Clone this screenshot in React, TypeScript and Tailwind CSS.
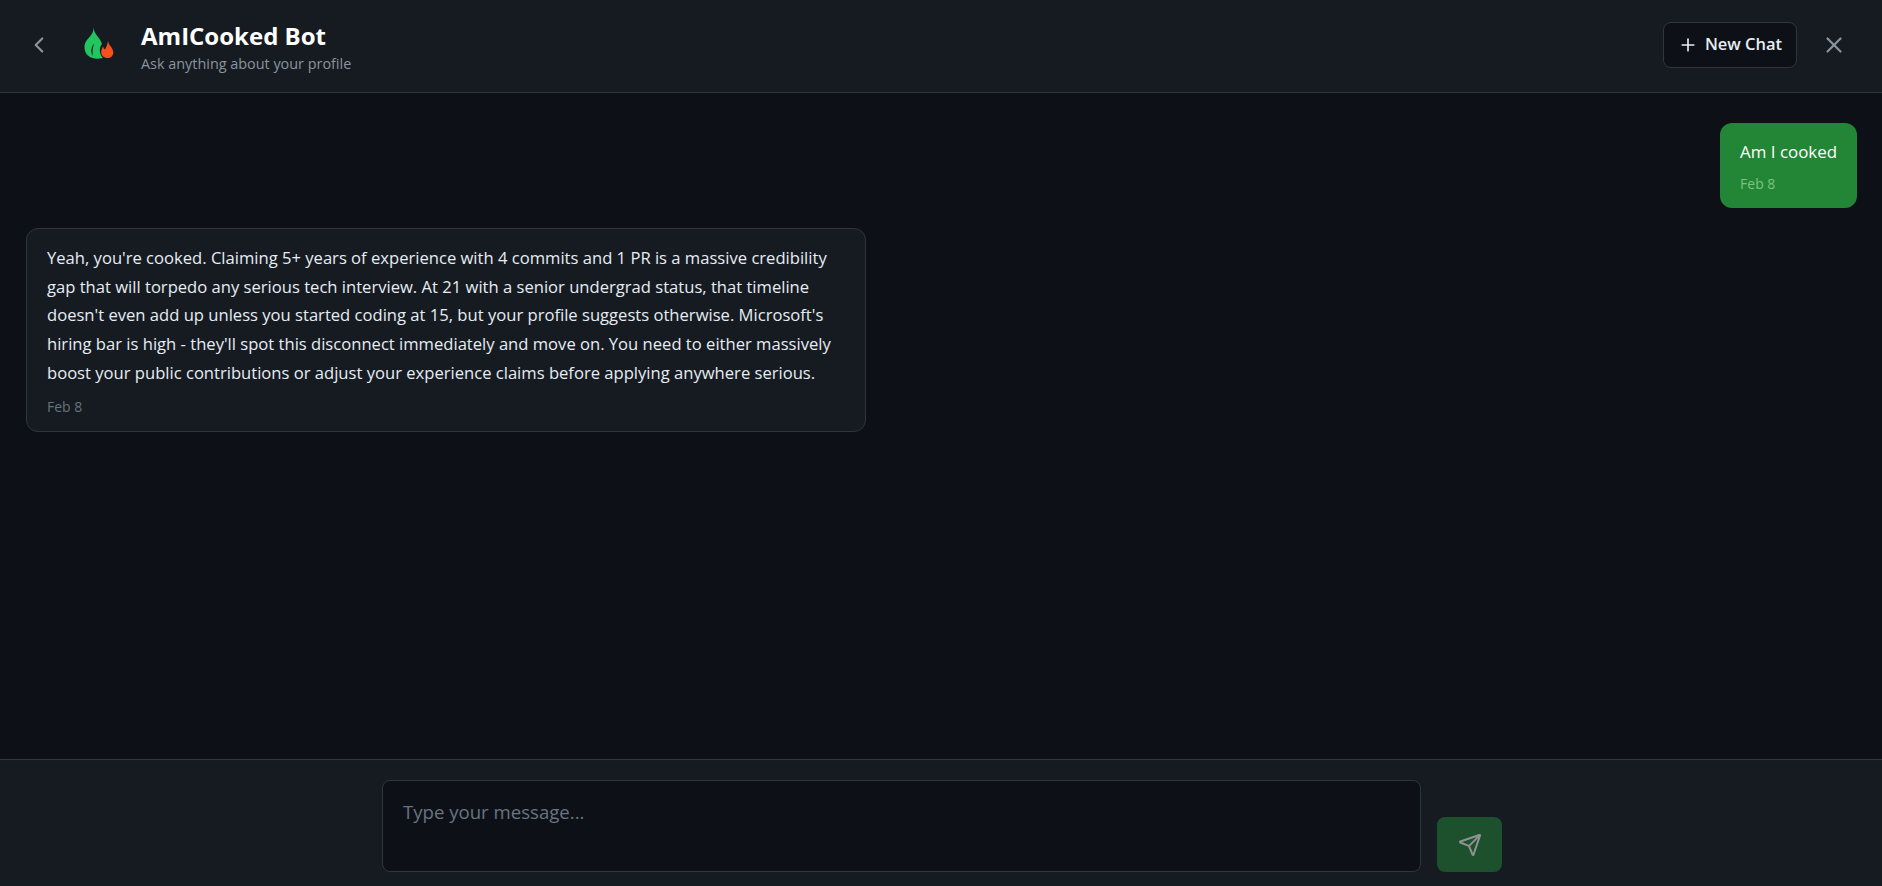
import React from 'react';
import { ChevronLeft, Plus, X, Send } from 'lucide-react';

const FlameLogo = () => (
  <svg width="30" height="32" viewBox="0 0 30 32" className="shrink-0">
    <path
      d="M9.500 .5C10 4.500 11.500 7 14 10C16 12.500 17.500 15 18 17C16 19 15.500 22 16 25C16.500 27.500 17.500 29.500 19 31C15 32 11 32 8 30.800C3.500 29.500 .5 25.500 .5 20C.5 15 3.500 12.500 6 9.500C8 7 9.800 4 9.500 .5Z"
      fill="#22c55e"
    />
    <path d="M10 16.500C7.500 19.500 6.300 24.500 8.700 29C8.300 24.500 8.800 20.500 10 16.500Z" fill="#161b22" />
    <path
      d="M24 13.700C24.500 17 26 18.500 27.500 20.500C28.800 22.500 29.500 24.500 29.300 26C29 29 26.500 31 23.500 31C20 31 17.200 28.500 17.200 25.500C17.200 23 18 21 19.200 19.500C19.500 21 20 22 21 22.500C22.500 20 23.500 17 24 13.700Z"
      fill="#f4511e"
      stroke="#161b22"
      strokeWidth="0.8"
      paintOrder="stroke"
    />
  </svg>
);

export default function App() {
  return (
    <div className="flex flex-col h-screen bg-[#0d1117] font-['Open_Sans','Liberation_Sans',sans-serif] overflow-hidden">
      <header className="flex items-center justify-between h-[93px] shrink-0 bg-[#161b22] border-b border-[#30363d] pl-[26px] pr-[30px] pb-[3px]">
        <div className="flex items-center">
          <button className="w-[26px] flex justify-center text-[#8b949e]">
            <ChevronLeft size={26} />
          </button>
          <div className="ml-[32px] mb-[3px]">
            <FlameLogo />
          </div>
          <div className="ml-[27px] mt-[4px]">
            <h1 className="text-[24px] leading-[30px] font-bold text-white">AmICooked Bot</h1>
            <p className="mt-[4px] text-[14.400px] leading-[18px] text-[#8b949e]">Ask anything about your profile</p>
          </div>
        </div>
        <div className="flex items-center gap-[19px]">
          <button className="flex items-center justify-center gap-[7px] w-[134px] h-[46px] rounded-lg bg-[#0d1117] border border-[#30363d] text-[#e6edf3] text-[16.500px] font-semibold">
            <Plus size={20} />
            New Chat
          </button>
          <button className="w-[36px] flex justify-center text-[#8b949e]">
            <X size={26} />
          </button>
        </div>
      </header>

      <main className="flex-1 flex flex-col gap-[20px] pt-[30px] pl-[26px] pr-[25px]">
        <div className="self-end rounded-xl bg-[#238636] px-[20px] pt-[15px] pb-[14px]">
          <p className="text-[16.900px] leading-[28.800px] text-white">Am I cooked</p>
          <p className="mt-[7px] text-[14px] leading-[20px] text-[#7ac47f]">Feb 8</p>
        </div>
        <div className="self-start w-[840px] rounded-xl bg-[#161b22] border border-[#30363d] px-[20px] pt-[15px] pb-[14px]">
          <p className="text-[16.600px] leading-[28.800px] text-[#e6edf3]">
            Yeah, you're cooked. Claiming 5+ years of experience with 4 commits and 1 PR is a massive credibility gap that will torpedo any serious tech interview. At 21 with a senior undergrad status, that timeline doesn't even add up unless you started coding at 15, but your profile suggests otherwise. Microsoft's hiring bar is high - they'll spot this disconnect immediately and move on. You need to either massively boost your public contributions or adjust your experience claims before applying anywhere serious.
          </p>
          <p className="mt-[9px] text-[14px] leading-[20px] text-[#6a727c]">Feb 8</p>
        </div>
      </main>

      <footer className="flex justify-center items-end h-[127px] shrink-0 bg-[#161b22] border-t border-[#30363d] pb-[14px] pl-[2px]">
        <div className="flex items-end gap-[16px] w-[1120px]">
          <textarea
            placeholder="Type your message..."
            className="flex-1 h-[92px] resize-none rounded-lg bg-[#0d1117] border border-[#30363d] px-[20px] pt-[18px] text-[18.600px] leading-[26px] text-[#e6edf3] placeholder:text-[#6a7480] outline-none"
          />
          <button className="flex items-center justify-center w-[65px] h-[55px] rounded-lg bg-[#238636]/50 text-[#8f938f]">
            <Send size={24} />
          </button>
        </div>
      </footer>
    </div>
  );
}
